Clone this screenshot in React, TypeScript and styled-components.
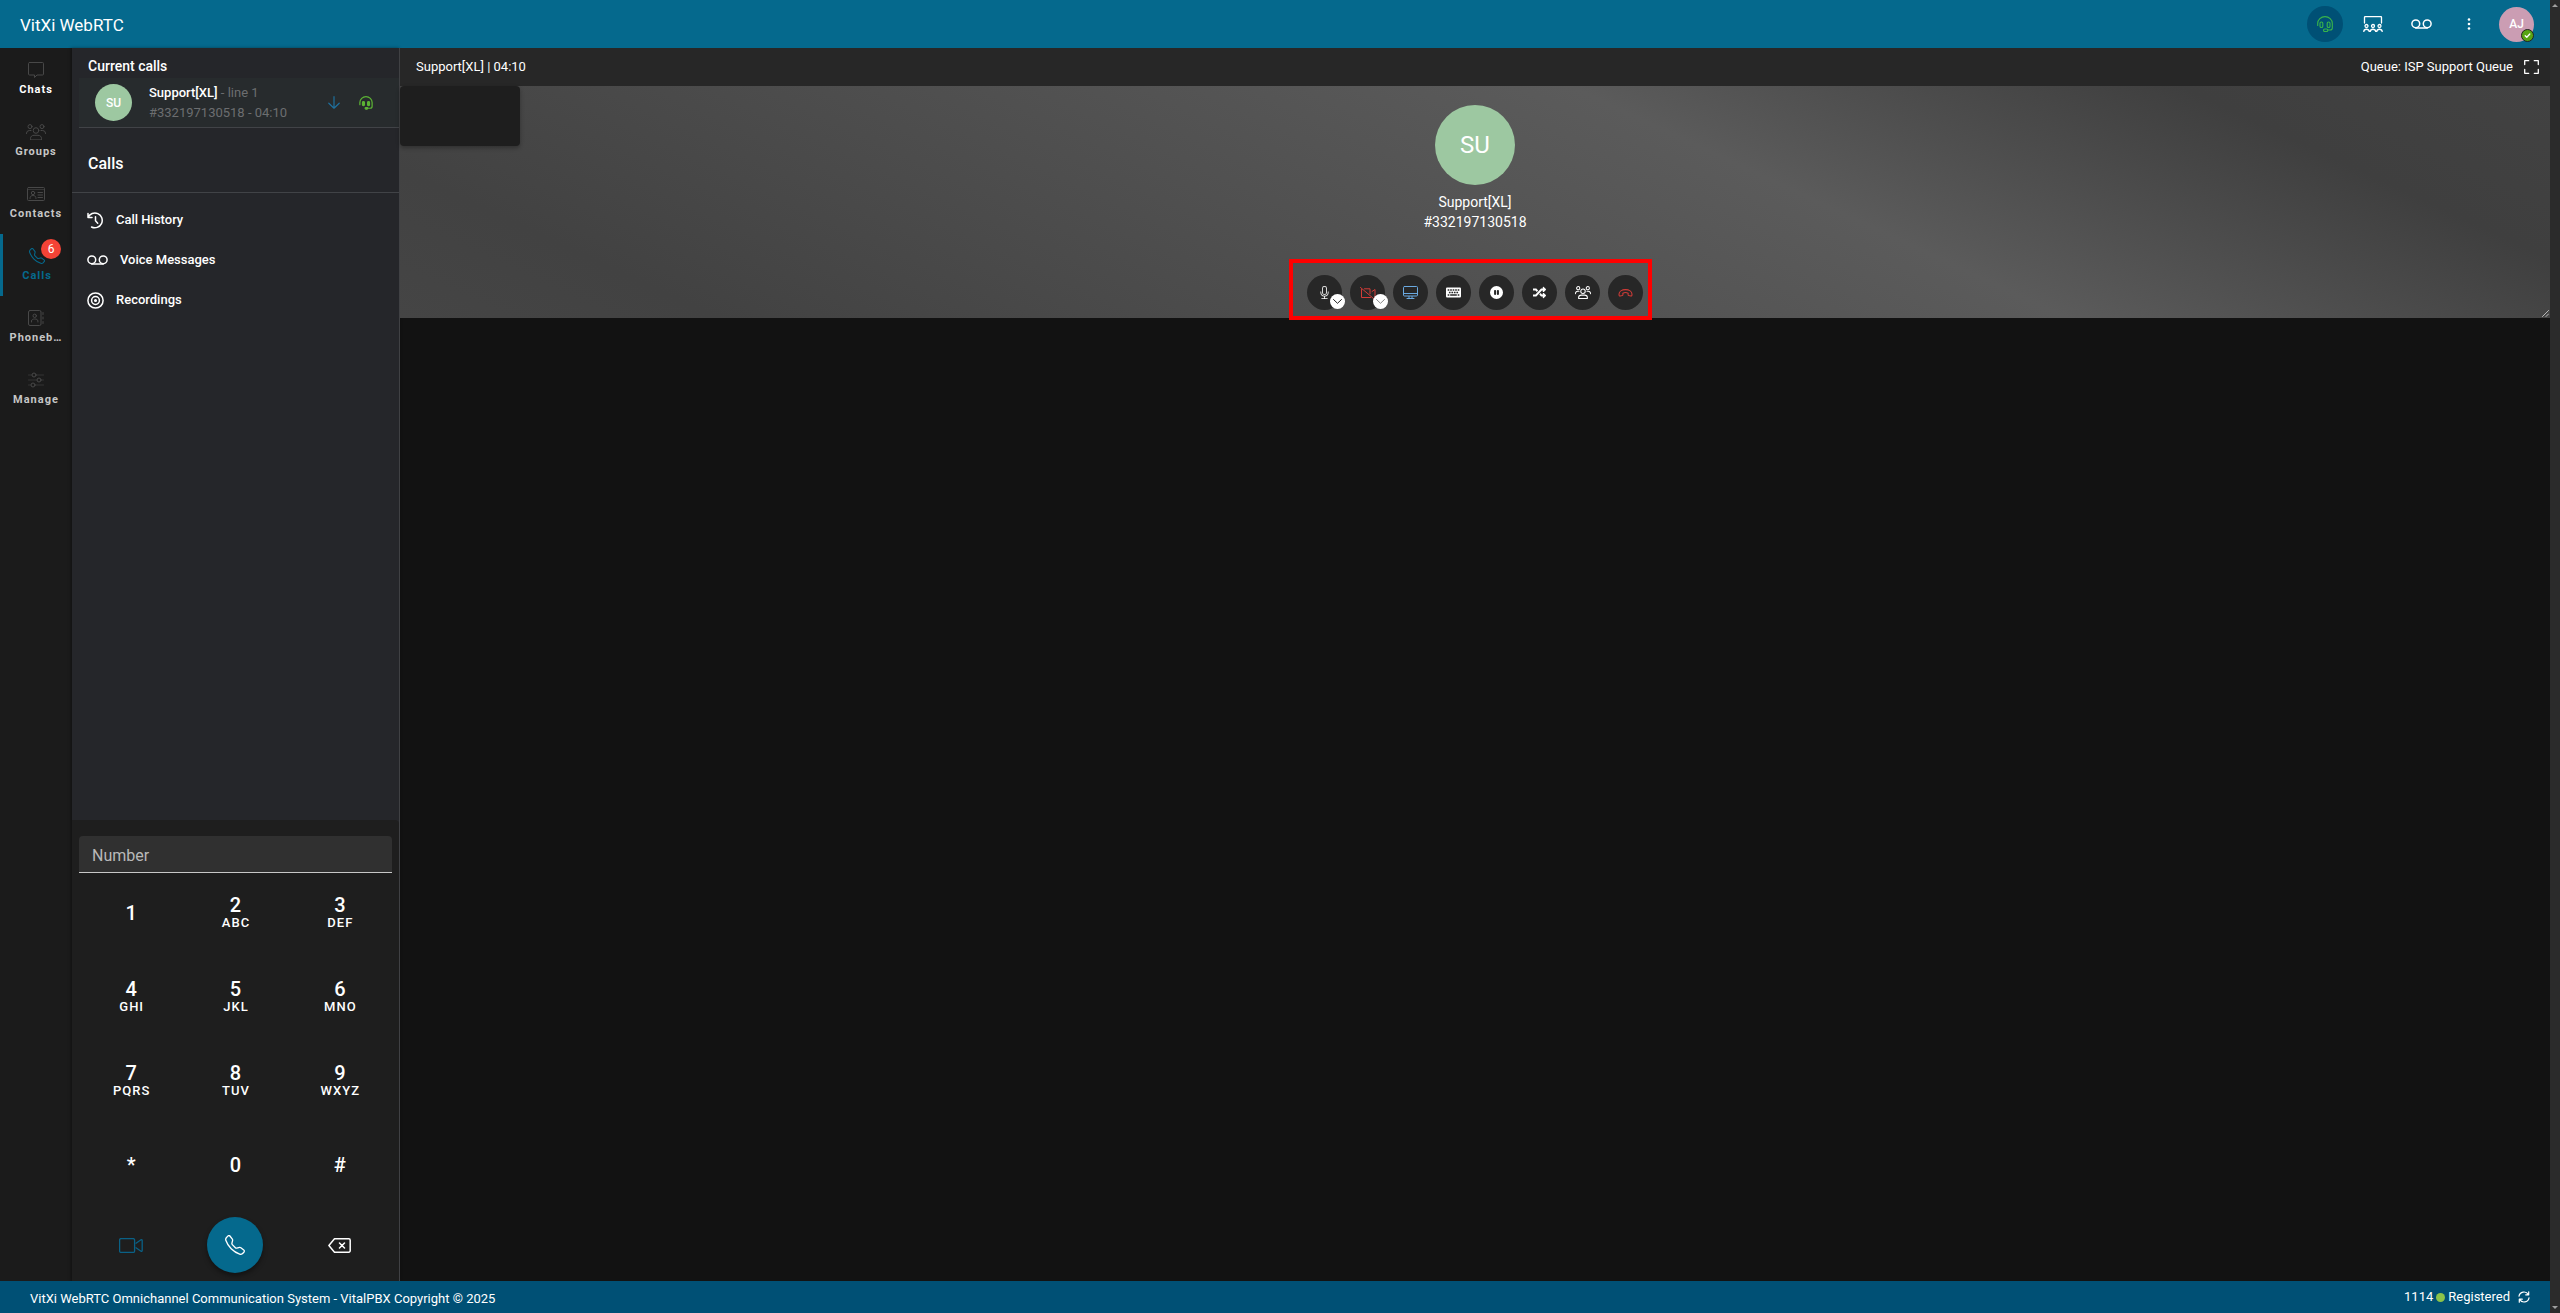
import React from "react";
import styled, { createGlobalStyle, css } from "styled-components";
import { FaKeyboard, FaRandom } from "react-icons/fa";
import { BsMic, BsPauseCircleFill, BsTelephone } from "react-icons/bs";

const GlobalStyle = createGlobalStyle`
  * { box-sizing: border-box; }
  body {
    margin: 0;
    background: #121212;
    color: #fff;
    font-family: Roboto, "Liberation Sans", sans-serif;
    font-size: 14px;
    line-height: 20px;
  }
  button, input { font: inherit; color: inherit; }
  button { border: 0; padding: 0; background: none; cursor: pointer; }
  a { color: inherit; text-decoration: none; }
  h1, h2, p, ul { margin: 0; padding: 0; font-size: inherit; font-weight: inherit; }
  ul { list-style: none; }
  svg { display: block; flex: none; }
`;

/* ---------- icons ---------- */

type IconProps = { size?: number; w?: number; h?: number; box?: string; sw?: number; children?: React.ReactNode };

const Icon = ({ size = 16, w, h, box = "0 0 16 16", sw = 1, children }: IconProps) => (
  <svg
    width={w ?? size}
    height={h ?? size}
    viewBox={box}
    fill="none"
    stroke="currentColor"
    strokeWidth={sw}
    strokeLinejoin="round"
    strokeLinecap="round"
    aria-hidden="true"
  >
    {children}
  </svg>
);

const ChatIcon = () => (
  <Icon>
    <path d="M1.5 .5h13a1 1 0 0 1 1 1v10.5a1 1 0 0 1-1 1H9l-2.500 2.500V13h-5a1 1 0 0 1-1-1V1.500a1 1 0 0 1 1-1z" />
  </Icon>
);

const GroupIcon = ({ w = 20, h = 16, sw = 1 }: IconProps) => (
  <Icon w={w} h={h} sw={sw} box="0 0 20 16">
    <circle cx="4" cy="2.6" r="2" />
    <circle cx="16" cy="2.6" r="2" />
    <circle cx="10" cy="6.5" r="2.8" />
    <path d="M.5 9.5V9a3 3 0 0 1 3-2.500h1.500M19.500 9.500V9a3 3 0 0 0-3-2.500H15" />
    <path d="M4.5 15.5v-1c0-2 1.500-3.200 3.500-3.200h4c2 0 3.500 1.200 3.500 3.200v1z" />
  </Icon>
);

const ContactIcon = () => (
  <Icon w={18} h={14} box="0 0 18 14">
    <rect x=".5" y=".5" width="17" height="13" rx="1" />
    <path d="M1 2.5h16" opacity=".6" />
    <circle cx="6" cy="6" r="1.7" />
    <path d="M3 11.5c0-2 1-3 3-3s3 1 3 3M11 5.500h4.500M11 8h4.500M11 10.500h4.500" />
  </Icon>
);

const BookIcon = () => (
  <Icon>
    <rect x=".5" y=".5" width="12.5" height="15" rx="1.5" />
    <circle cx="6.7" cy="5.8" r="1.7" />
    <path d="M3.5 12v-1c0-1.500 1.500-2 3.200-2s3.200 .5 3.200 2v1M15 2.500v2M15 7v2M15 11.500v2" />
  </Icon>
);

const SlidersIcon = () => (
  <Icon>
    <path d="M.5 3h3M8 3h7.500M.5 8h8M13 8h2.500M.5 13h2M7 13h8.500" opacity=".6" />
    <circle cx="6" cy="3" r="2" />
    <circle cx="11" cy="8" r="2" />
    <circle cx="5" cy="13" r="2" />
  </Icon>
);

const VoicemailIcon = () => (
  <Icon w={21} h={10} box="0 0 21 10" sw={1.5}>
    <circle cx="4.8" cy="4.8" r="3.9" />
    <circle cx="16.2" cy="4.8" r="3.9" />
    <path d="M4.8 9h11.400" />
  </Icon>
);

const HistoryIcon = () => (
  <Icon w={17} h={17} box="0 0 17 17" sw={1.5}>
    <path d="M1 5.5A7.400 7.400 0 1 1 4.500 15M1 1.500v4h4M8.500 4.800v4l2.200 2.400" />
  </Icon>
);

const RecordIcon = () => (
  <Icon w={17} h={17} box="0 0 17 17" sw={1.5}>
    <circle cx="8.5" cy="8.5" r="7.6" />
    <circle cx="8.5" cy="8.5" r="3.9" />
    <circle cx="8.5" cy="8.5" r=".8" fill="currentColor" />
  </Icon>
);

const HeadsetIcon = () => (
  <Icon sw={1.1}>
    <path d="M.7 9.5V7.300a7.300 6.700 0 0 1 14.600 0V12c0 1.500-1 2-2.300 2H11" />
    <rect x="3" y="6" width="2.8" height="5.5" rx="1.3" />
    <rect x="10.2" y="6" width="2.8" height="5.5" rx="1.3" />
    <rect x="6.5" y="13" width="4.3" height="2.5" rx="1.2" />
  </Icon>
);

const SolidHeadsetIcon = () => (
  <Icon size={14} sw={1.4}>
    <path d="M1 10V7.500a7 6.700 0 0 1 14 0v4.200c0 1.500-1 2.300-2.300 2.300H9" />
    <rect x="4" y="6.5" width="2.2" height="4.5" rx="1" fill="currentColor" />
    <rect x="9.8" y="6.5" width="2.2" height="4.5" rx="1" fill="currentColor" />
    <rect x="7" y="13.2" width="3" height="1.8" rx=".9" fill="currentColor" />
  </Icon>
);

const ArrowDownIcon = () => (
  <Icon w={12} h={13} box="0 0 12 13" sw={1.2}>
    <path d="M6 .7v11.400M.8 7.200 6 12.200l5.200-5" />
  </Icon>
);

const MeetingIcon = () => (
  <Icon w={20} h={16} box="0 0 20 16" sw={1.3}>
    <path d="M1.5 7V1.500a1 1 0 0 1 1-1h15a1 1 0 0 1 1 1V7" />
    <circle cx="3.5" cy="10" r="1.5" />
    <circle cx="10" cy="10" r="1.5" />
    <circle cx="16.5" cy="10" r="1.5" />
    <path d="M.8 15.5c.2-3 5-3 5.400 0M7.300 15.500c.2-3 5-3 5.400 0M13.800 15.500c.2-3 5-3 5.400 0" />
  </Icon>
);

const DotsIcon = () => (
  <Icon w={4} h={12} box="0 0 4 12">
    <g fill="currentColor" stroke="none">
      <circle cx="2" cy="1.5" r="1.3" />
      <circle cx="2" cy="6" r="1.3" />
      <circle cx="2" cy="10.5" r="1.3" />
    </g>
  </Icon>
);

const CheckIcon = () => (
  <Icon size={7} box="0 0 7 7" sw={1.3}>
    <path d="M1.2 3.7 2.8 5.2 5.8 2" />
  </Icon>
);

const FullscreenIcon = () => (
  <Icon w={15} h={14} box="0 0 15 14" sw={1.3}>
    <path d="M.7 4.500V.7h4M10.300 .7h4v3.800M14.300 9.500v3.800h-4M4.700 13.300h-4V9.500" />
  </Icon>
);

const VideoIcon = () => (
  <Icon w={24} h={15} box="0 0 24 15" sw={1.3}>
    <rect x=".6" y=".6" width="15" height="13.8" rx="1.5" />
    <path d="M17 5.200 22 1.800c.8-.4 1.200 0 1.200 .6v10.200c0 .6-.4 1-1.200 .6L17 9.800" />
  </Icon>
);

const VideoOffIcon = () => (
  <Icon w={16} h={12} box="0 0 16 12">
    <path d="M.5 .5 13.500 11.500M4.500 1.800h5.500v5M1.500 2.500v8h9M12 4.500l3-2v7.500" />
  </Icon>
);

const BackspaceIcon = () => (
  <Icon w={23} h={15} box="0 0 23 15" sw={1.5}>
    <path d="M6.5 .8h14.300a1.400 1.400 0 0 1 1.400 1.400v10.600a1.400 1.400 0 0 1-1.400 1.400H6.500L.9 7.500zM11.500 5l5 5M16.500 5l-5 5" />
  </Icon>
);

const ScreenIcon = () => (
  <Icon w={15} h={13} box="0 0 15 13">
    <rect x=".5" y=".5" width="14" height="9.5" rx="1" />
    <path d="M1 7.500h13M6 10.500v2M9 10.500v2M4 12.500h7" />
  </Icon>
);

const HangupIcon = () => (
  <Icon w={15} h={8} box="0 0 16 9" sw={1.2}>
    <path d="M8 .7C4 .7 .7 2.700 .7 5.800c0 1.700 .4 2.300 1.300 2.100l2.300-.5c.8-.2 .900-.6 .8-1.400l-.1-1.200c1.600-.9 4.400-.9 6 0l-.1 1.200c-.1 .800 0 1.200 .8 1.400l2.300 .5c.9 .200 1.300-.4 1.300-2.100C15.300 2.700 12 .7 8 .7z" />
  </Icon>
);

const ChevronIcon = () => (
  <Icon w={9} h={5} box="0 0 9 5">
    <path d="M.5 .5l4 3.800 4-3.800" />
  </Icon>
);

const RefreshIcon = () => (
  <Icon w={12} h={12} box="0 0 12 12" sw={1.2}>
    <path d="M1 5.200A5 5 0 0 1 10.300 3.600M11 6.800A5 5 0 0 1 1.700 8.400M10.700 .8v3h-3M1.300 11.200v-3h3" />
  </Icon>
);

const GripIcon = () => (
  <Icon size={7} box="0 0 8 8">
    <path d="M.5 7.500l7-7M4.500 7.500l3-3" stroke="#ccc" />
  </Icon>
);

/* ---------- shell ---------- */

const Shell = styled.div`
  display: grid;
  grid-template-columns: minmax(0, 1fr) 10px;
  height: 100vh;
`;

const Page = styled.div`
  display: grid;
  grid-template-rows: 48px minmax(0, 1fr) 32px;
  min-width: 0;
`;

const ScrollTrack = styled.div`
  display: flex;
  flex-direction: column;
  justify-content: space-between;
  align-items: center;
  padding: 4px 0;
  background: #2b2b2b;
`;

const ScrollArrow = styled.span<{ $down?: boolean }>`
  border: 3px solid transparent;
  ${(p) => (p.$down ? "border-top-color: #a0a0a0; border-bottom: 0;" : "border-bottom-color: #a0a0a0; border-top: 0;")}
`;

const TopBar = styled.header`
  display: flex;
  align-items: center;
  justify-content: space-between;
  padding: 0 16px 0 20px;
  background: #05698d;
`;

const Brand = styled.h1`
  font-size: 17px;
  line-height: 24px;
  padding-top: 2px;
`;

const TopActions = styled.div`
  display: flex;
  align-items: center;
  gap: 12px;
`;

const TopButton = styled.button<{ $active?: boolean }>`
  display: grid;
  place-items: center;
  width: 36px;
  height: 36px;
  border-radius: 50%;
  ${(p) => p.$active && "background: #005075; color: #39b54a;"}
`;

const Avatar = styled.span<{ $size: number; $font: number; $tone?: string }>`
  display: grid;
  place-items: center;
  width: ${(p) => p.$size}px;
  height: ${(p) => p.$size}px;
  border-radius: 50%;
  background: ${(p) => p.$tone ?? "#9dc8a1"};
  font-size: ${(p) => p.$font}px;
  font-weight: ${(p) => (p.$font < 20 ? 500 : 400)};
  line-height: 1;
`;

const UserButton = styled.button`
  position: relative;
`;

const Presence = styled.span`
  position: absolute;
  right: 0;
  bottom: 0;
  display: grid;
  place-items: center;
  width: 13px;
  height: 13px;
  border: 1px solid #222;
  border-radius: 50%;
  background: #58a414;
`;

const Body = styled.div`
  display: grid;
  grid-template-columns: 72px 328px minmax(0, 1fr);
  min-height: 0;
`;

/* ---------- rail ---------- */

const Rail = styled.nav`
  background: #1b1b1b;
`;

const RailLink = styled.a<{ $active?: boolean }>`
  display: flex;
  flex-direction: column;
  align-items: center;
  gap: 2px;
  height: 62px;
  padding: 12px 4px 0;
  border-left: 3px solid ${(p) => (p.$active ? "#05698d" : "transparent")};
  border-right: ${(p) => (p.$active ? "1px" : "3px")} solid transparent;
  color: ${(p) => (p.$active ? "#05698d" : "#484848")};
`;

const RailGlyph = styled.span`
  position: relative;
  display: grid;
  place-items: center;
  height: 20px;
`;

const RailLabel = styled.span<{ $tone: string }>`
  font-size: 11px;
  line-height: 16px;
  font-weight: 700;
  letter-spacing: 1px;
  color: ${(p) => p.$tone};
  max-width: 64px;
  white-space: nowrap;
`;

const Count = styled.span`
  position: absolute;
  left: 12px;
  top: -7px;
  display: grid;
  place-items: center;
  width: 20px;
  height: 20px;
  border-radius: 50%;
  background: #f44336;
  color: #fff;
  font-size: 12px;
  line-height: 20px;
`;

/* ---------- call panel ---------- */

const Panel = styled.section`
  display: flex;
  flex-direction: column;
  min-height: 0;
  background: #25262a;
  border-right: 1px solid #404144;
  box-shadow: -1px 0 3px rgba(0, 0, 0, 0.4);
`;

const PanelHeading = styled.h2`
  padding: 8px 16px 2px;
  font-size: 14px;
  line-height: 20px;
  font-weight: 500;
`;

const CurrentCall = styled.div`
  display: flex;
  align-items: center;
  height: 50px;
  margin-left: 7px;
  padding: 0 26px 0 16px;
  background: #272b2d;
  border-bottom: 1px solid #414347;
`;

const CallText = styled.div`
  flex: 1;
  padding-left: 17px;
  font-size: 13px;
  line-height: 20px;
  color: #6c6e70;
  b { color: #fff; font-weight: 500; }
`;

const CallIcons = styled.div`
  display: flex;
  align-items: center;
  gap: 19px;
`;

const Tint = styled.span<{ $tone: string }>`
  color: ${(p) => p.$tone};
`;

const SectionTitle = styled.h2`
  padding: 24px 16px 16px;
  font-size: 16px;
  line-height: 24px;
  font-weight: 500;
  border-bottom: 1px solid #414347;
`;

const Menu = styled.ul`
  flex: 1;
  padding-top: 7px;
`;

const MenuLink = styled.a`
  display: flex;
  align-items: center;
  gap: 12px;
  height: 40px;
  padding: 0 15px;
  font-size: 13px;
  font-weight: 500;
`;

/* ---------- dial pad ---------- */

const DialPad = styled.form`
  padding: 16px 7px 0;
  background: #1e1e1e;
  border-top-right-radius: 4px;
`;

const NumberInput = styled.input`
  display: block;
  width: 100%;
  height: 37px;
  padding: 3px 12px 0 13px;
  border: 0;
  border-bottom: 1px solid #c8c8c8;
  border-radius: 4px 4px 0 0;
  background: #303030;
  font-size: 16px;
  outline: 0;
  &::placeholder { color: #b9b9b9; opacity: 1; }
`;

const Keys = styled.div`
  display: grid;
  grid-template-columns: repeat(3, 1fr);
  grid-auto-rows: 84px;
`;

const Key = styled.button`
  display: flex;
  flex-direction: column;
  align-items: center;
  justify-content: center;
  padding-bottom: 4px;
  font-size: 20px;
  line-height: 20px;
  font-weight: 500;
`;

const KeyLetters = styled.span`
  padding-left: 1px;
  font-size: 13px;
  line-height: 16px;
  letter-spacing: 1px;
`;

const DialActions = styled.div`
  display: grid;
  grid-template-columns: repeat(3, 1fr);
  place-items: center;
  height: 72px;
`;

const DialButton = styled.button<{ $kind?: "call" | "video" }>`
  display: grid;
  place-items: center;
  width: 56px;
  height: 56px;
  border-radius: 50%;
  ${(p) => p.$kind === "call" && css`
    background: #05698d;
    box-shadow: 0 3px 5px rgba(0, 0, 0, 0.4);
  `}
  ${(p) => p.$kind === "video" && "color: #0a6186;"}
`;

/* ---------- call stage ---------- */

const Stage = styled.main`
  min-width: 0;
`;

const StageBar = styled.div`
  display: flex;
  align-items: center;
  height: 38px;
  padding: 0 11px 0 16px;
  background: #272727;
  font-size: 13px;
`;

const QueueName = styled.span`
  margin-left: auto;
  margin-right: 11px;
`;

const Banner = styled.section`
  position: relative;
  display: flex;
  flex-direction: column;
  align-items: center;
  height: 232px;
  padding-top: 19px;
  background: linear-gradient(25deg, #454545 0%, #424242 12%, #5b5b5b 63%, #3f3f3f 86%, #424242 100%);
`;

const SelfView = styled.div`
  position: absolute;
  left: 0;
  top: 0;
  width: 120px;
  height: 60px;
  border-radius: 4px;
  background: #1e1e1e;
  box-shadow: 0 2px 4px rgba(0, 0, 0, 0.3);
`;

const Caller = styled.div`
  padding-top: 7px;
  text-align: center;
`;

const Controls = styled.div`
  position: relative;
  display: flex;
  gap: 8px;
  margin-top: 43px;
`;

const Highlight = styled.span`
  position: absolute;
  inset: -16px -9px -10px -18px;
  border: 4px solid #f00;
  pointer-events: none;
`;

const ControlSlot = styled.div`
  position: relative;
`;

const Control = styled.button<{ $tone?: string }>`
  display: grid;
  place-items: center;
  width: 35px;
  height: 35px;
  border-radius: 50%;
  background: #272727;
  color: ${(p) => p.$tone ?? "#fff"};
`;

const Expand = styled.button<{ $dim?: boolean }>`
  position: absolute;
  left: 23px;
  top: 19px;
  display: grid;
  place-items: center;
  width: 15px;
  height: 15px;
  border-radius: 50%;
  background: #fff;
  color: ${(p) => (p.$dim ? "#8a8a8a" : "#222")};
`;

const Grip = styled.span`
  position: absolute;
  right: 1px;
  bottom: 1px;
`;

/* ---------- footer ---------- */

const Footer = styled.footer`
  display: flex;
  align-items: center;
  justify-content: space-between;
  padding: 0 20px 0 30px;
  background: #005075;
  font-size: 13px;
`;

const Copyright = styled.p`
  padding-top: 3px;
`;

const Status = styled.div`
  display: flex;
  align-items: center;
  gap: 3px;
`;

const Dot = styled.i`
  width: 9px;
  height: 9px;
  border-radius: 50%;
  background: #8bc34a;
`;

const Retry = styled.button`
  margin-left: 5px;
`;

/* ---------- data ---------- */

const rail = [
  { label: "Chats", icon: <ChatIcon />, tone: "#fff" },
  { label: "Groups", icon: <GroupIcon />, tone: "#c6c6c6" },
  { label: "Contacts", icon: <ContactIcon />, tone: "#c6c6c6" },
  { label: "Calls", icon: <BsTelephone size={16} />, tone: "#05698d", count: 6 },
  { label: "Phoneb…", icon: <BookIcon />, tone: "#c6c6c6" },
  { label: "Manage", icon: <SlidersIcon />, tone: "#c6c6c6" },
];

const menu = [
  { label: "Call History", icon: <HistoryIcon /> },
  { label: "Voice Messages", icon: <VoicemailIcon /> },
  { label: "Recordings", icon: <RecordIcon /> },
];

const keys = [
  ["1"], ["2", "ABC"], ["3", "DEF"],
  ["4", "GHI"], ["5", "JKL"], ["6", "MNO"],
  ["7", "PQRS"], ["8", "TUV"], ["9", "WXYZ"],
  ["*"], ["0"], ["#"],
];

const controls = [
  { name: "Microphone", icon: <BsMic size={13} />, more: true },
  { name: "Camera", icon: <VideoOffIcon />, tone: "#d33c38", more: true, dim: true },
  { name: "Share screen", icon: <ScreenIcon />, tone: "#6aa9e0" },
  { name: "Keypad", icon: <FaKeyboard size={15} /> },
  { name: "Hold", icon: <BsPauseCircleFill size={13} /> },
  { name: "Transfer", icon: <FaRandom size={13} /> },
  { name: "Conference", icon: <GroupIcon w={16} h={13} sw={1.3} /> },
  { name: "Hang up", icon: <HangupIcon />, tone: "#d33c38" },
];

export default function App() {
  return (
    <Shell>
      <GlobalStyle />
      <Page>
        <TopBar>
          <Brand>VitXi WebRTC</Brand>
          <TopActions>
            <TopButton $active aria-label="Agent"><HeadsetIcon /></TopButton>
            <TopButton aria-label="Meetings"><MeetingIcon /></TopButton>
            <TopButton aria-label="Voicemail"><VoicemailIcon /></TopButton>
            <TopButton aria-label="More"><DotsIcon /></TopButton>
            <UserButton aria-label="Profile">
              <Avatar $size={35} $font={12} $tone="#cb9db3">AJ</Avatar>
              <Presence><CheckIcon /></Presence>
            </UserButton>
          </TopActions>
        </TopBar>

        <Body>
          <Rail>
            {rail.map((r) => (
              <RailLink key={r.label} href="#" $active={!!r.count}>
                <RailGlyph>
                  {r.icon}
                  {r.count && <Count>{r.count}</Count>}
                </RailGlyph>
                <RailLabel $tone={r.tone}>{r.label}</RailLabel>
              </RailLink>
            ))}
          </Rail>

          <Panel>
            <PanelHeading>Current calls</PanelHeading>
            <CurrentCall>
              <Avatar $size={37} $font={12}>SU</Avatar>
              <CallText>
                <p><b>Support[XL]</b> - line 1</p>
                <p>#332197130518 - 04:10</p>
              </CallText>
              <CallIcons>
                <Tint $tone="#1f6f9c"><ArrowDownIcon /></Tint>
                <Tint $tone="#5cb335"><SolidHeadsetIcon /></Tint>
              </CallIcons>
            </CurrentCall>
            <SectionTitle>Calls</SectionTitle>
            <Menu>
              {menu.map((m) => (
                <li key={m.label}>
                  <MenuLink href="#">{m.icon}{m.label}</MenuLink>
                </li>
              ))}
            </Menu>
            <DialPad onSubmit={(e) => e.preventDefault()}>
              <NumberInput type="tel" aria-label="Number" placeholder="Number" />
              <Keys>
                {keys.map(([digit, letters]) => (
                  <Key key={digit} type="button">
                    {digit}
                    {letters && <KeyLetters>{letters}</KeyLetters>}
                  </Key>
                ))}
              </Keys>
              <DialActions>
                <DialButton type="button" $kind="video" aria-label="Video call"><VideoIcon /></DialButton>
                <DialButton type="submit" $kind="call" aria-label="Call"><BsTelephone size={20} /></DialButton>
                <DialButton type="button" aria-label="Delete"><BackspaceIcon /></DialButton>
              </DialActions>
            </DialPad>
          </Panel>

          <Stage>
            <StageBar>
              <span>Support[XL] | 04:10</span>
              <QueueName>Queue: ISP Support Queue</QueueName>
              <button aria-label="Full screen"><FullscreenIcon /></button>
            </StageBar>
            <Banner>
              <SelfView />
              <Avatar $size={80} $font={24}>SU</Avatar>
              <Caller>
                <p>Support[XL]</p>
                <p>#332197130518</p>
              </Caller>
              <Controls>
                {controls.map((c) => (
                  <ControlSlot key={c.name}>
                    <Control $tone={c.tone} aria-label={c.name}>{c.icon}</Control>
                    {c.more && (
                      <Expand $dim={c.dim} aria-label={c.name + " options"}><ChevronIcon /></Expand>
                    )}
                  </ControlSlot>
                ))}
                <Highlight />
              </Controls>
              <Grip><GripIcon /></Grip>
            </Banner>
          </Stage>
        </Body>

        <Footer>
          <Copyright>VitXi WebRTC Omnichannel Communication System - VitalPBX Copyright © 2025</Copyright>
          <Status>
            <span>1114</span>
            <Dot />
            <span>Registered</span>
            <Retry aria-label="Reconnect"><RefreshIcon /></Retry>
          </Status>
        </Footer>
      </Page>
      <ScrollTrack>
        <ScrollArrow />
        <ScrollArrow $down />
      </ScrollTrack>
    </Shell>
  );
}
